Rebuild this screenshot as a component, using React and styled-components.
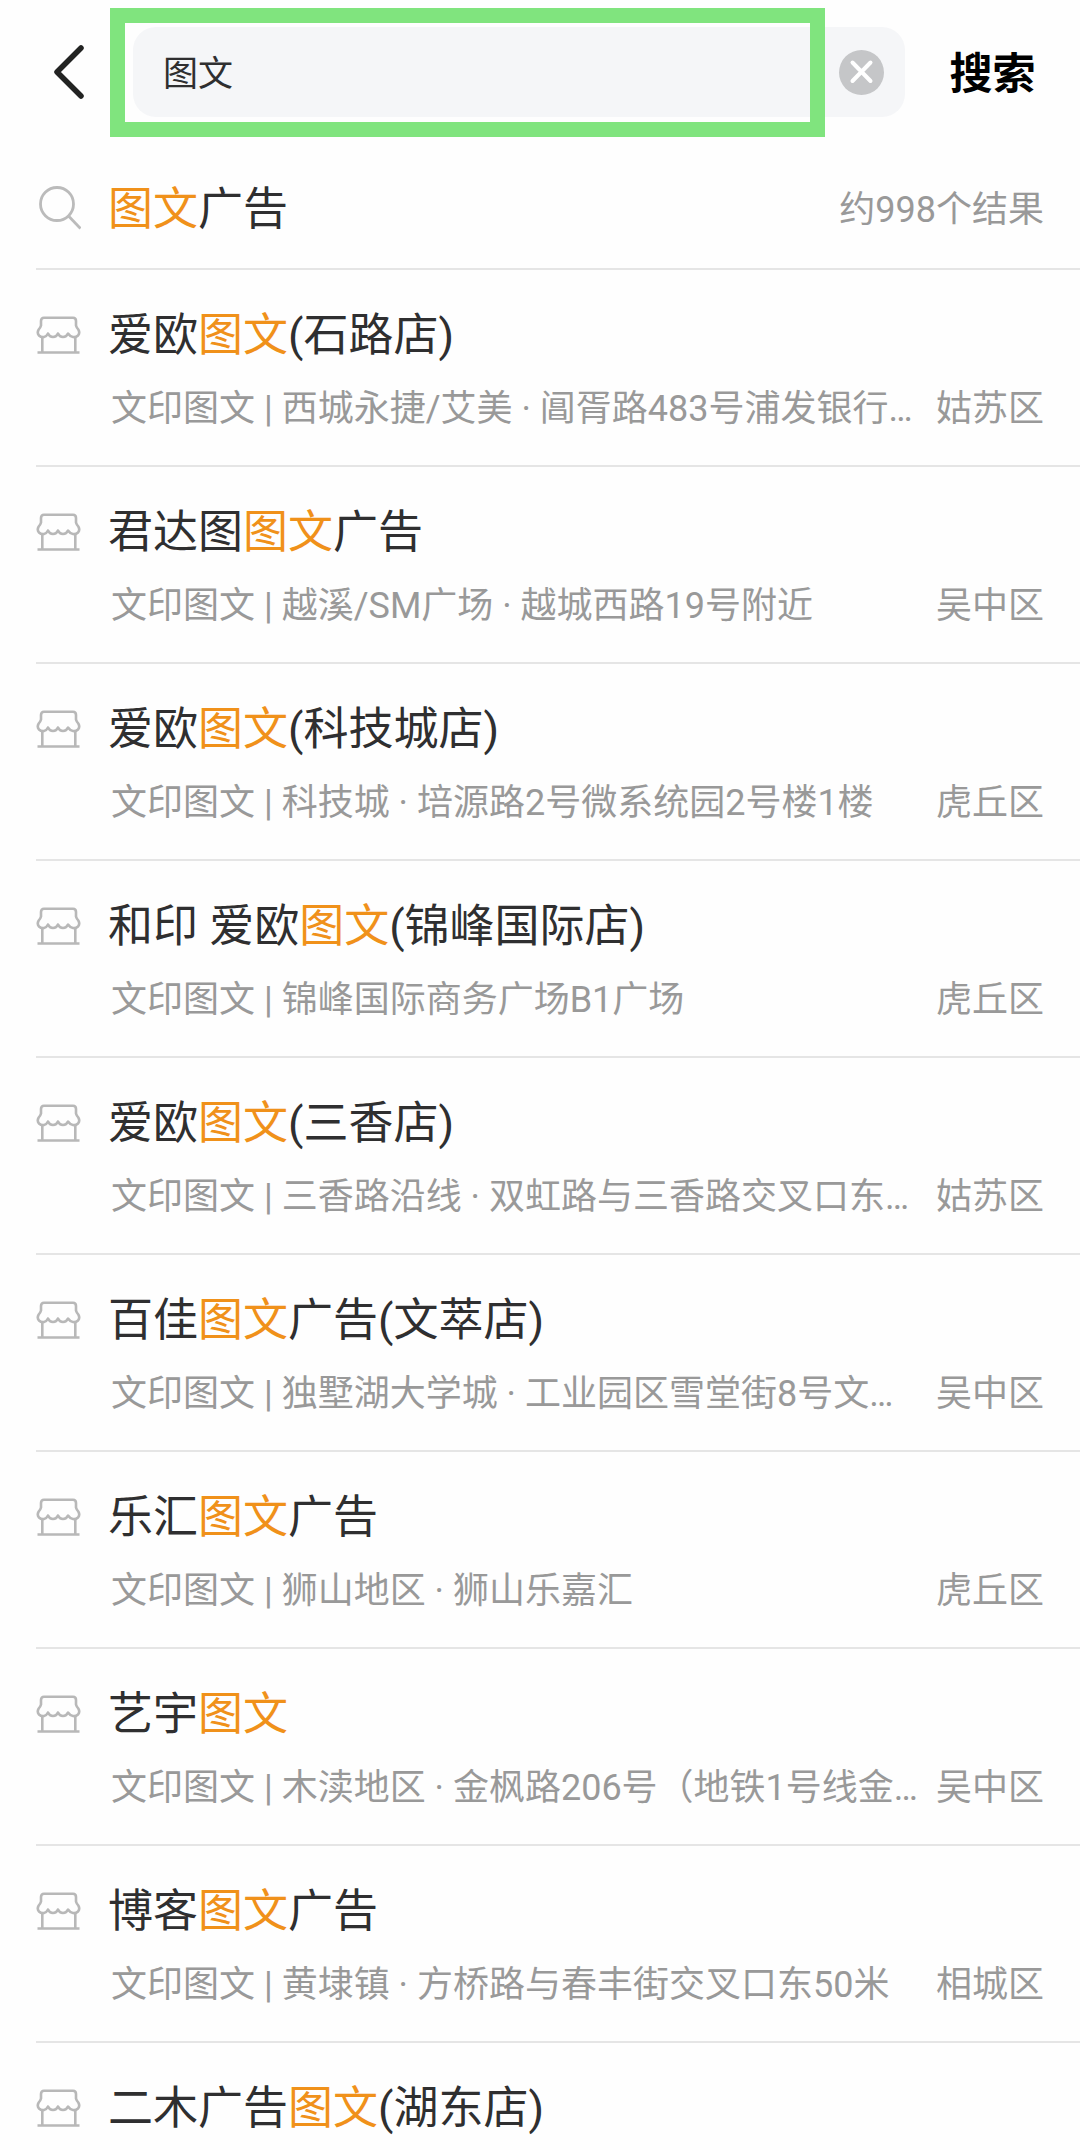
import styled, { createGlobalStyle } from "styled-components";
import { useState } from "react";

const GlobalStyle = createGlobalStyle`
  * {
    box-sizing: border-box;
  }

  body {
    margin: 0;
    background: #fefefe;
    font-family: Roboto, "Noto Sans CJK SC", sans-serif;
    color: #2f2f30;
  }
`;

const Page = styled.main`
  display: flex;
  flex-direction: column;
  width: 100%;
  height: 100vh;
  overflow: hidden;
`;

const Header = styled.form`
  display: flex;
  align-items: center;
  flex-shrink: 0;
  padding: 27px 0 33px;
`;

const BackButton = styled.button`
  display: flex;
  align-items: center;
  width: 133px;
  height: 90px;
  padding: 0 0 0 54px;
  border: none;
  background: none;
  cursor: pointer;
`;

const SearchField = styled.div`
  position: relative;
  display: flex;
  align-items: center;
  flex: 1;
  min-width: 0;
  height: 90px;
  padding: 0 21px 0 30px;
  border-radius: 23px;
  background: #f5f6f8;
`;

const SearchInput = styled.input`
  flex: 1;
  min-width: 0;
  height: 60px;
  padding: 0 0 3px;
  border: none;
  outline: none;
  background: none;
  font-family: inherit;
  font-size: 35px;
  color: #2f2f30;
`;

const FocusFrame = styled.div`
  position: absolute;
  top: -19px;
  right: 80px;
  bottom: -20px;
  left: -23px;
  border: 15px solid #80e47e;
  pointer-events: none;
`;

const ClearButton = styled.button`
  display: flex;
  width: 45px;
  height: 45px;
  padding: 0;
  border: none;
  background: none;
  cursor: pointer;
`;

const SearchButton = styled.button`
  width: 175px;
  height: 90px;
  padding: 0 0 4px;
  border: none;
  background: none;
  font-family: inherit;
  font-size: 43px;
  font-weight: 700;
  color: #000000;
  cursor: pointer;
`;

const Results = styled.ul`
  margin: 0;
  padding: 0 0 0 36px;
  list-style: none;
`;

const Item = styled.li`
  border-bottom: 2px solid #e5e5e5;
`;

const ItemLink = styled.a`
  display: flex;
  gap: 27px;
  padding: ${({ $summary }) => ($summary ? "30px 36px 28px 0" : "36px 36px 32px 0")};
  color: inherit;
  text-decoration: none;
`;

const IconBox = styled.span`
  display: flex;
  align-items: center;
  justify-content: center;
  flex-shrink: 0;
  width: 45px;
  height: 60px;
`;

const Body = styled.div`
  flex: 1;
  min-width: 0;
`;

const Title = styled.div`
  font-size: 45px;
  line-height: 60px;
  white-space: nowrap;
`;

const Highlight = styled.span`
  color: #f0911a;
`;

const Detail = styled.div`
  display: flex;
  justify-content: space-between;
  gap: 16px;
  margin-top: 19px;
  padding-left: 3px;
  font-size: 36px;
  line-height: 48px;
  color: #999999;
`;

const Address = styled.span`
  min-width: 0;
  overflow: hidden;
  white-space: nowrap;
`;

const District = styled.span`
  flex-shrink: 0;
`;

const Count = styled.span`
  font-size: 36px;
  line-height: 60px;
  color: #999999;
`;

const BackIcon = () => (
  <svg width="30" height="54" viewBox="0 0 30 54" fill="none" stroke="#222322" strokeWidth="5.5" strokeLinecap="round" strokeLinejoin="round" aria-hidden="true">
    <path d="M27 3L3 27l24 24" />
  </svg>
);

const ClearIcon = () => (
  <svg width="45" height="45" viewBox="0 0 45 45" aria-hidden="true">
    <circle cx="22.5" cy="22.5" r="22.5" fill="#c5c6c8" />
    <path d="M13.500 12.500l18 18.500M31.500 12.500l-18 18.500" stroke="#ffffff" strokeWidth="4" strokeLinecap="round" />
  </svg>
);

const SearchIcon = () => (
  <svg width="45" height="48" viewBox="0 0 45 48" fill="none" stroke="#bbbbbb" strokeWidth="2.8" aria-hidden="true">
    <circle cx="21" cy="18" r="16.5" />
    <path d="M32.500 30l12 12.500" />
  </svg>
);

const ShopIcon = () => (
  <svg width="45" height="40" viewBox="0 0 45 40" fill="none" stroke="#b8b8b8" strokeWidth="2.6" strokeLinejoin="round" aria-hidden="true">
    <path d="M8 1.800H37Q40 1.800 40 5V9.500Q40.500 11.500 42.300 13.500Q44.300 17 42 19.500Q40 21.500 37 21Q34 20.500 32 17.500Q30.500 21 27 21Q23.500 21 22 17.500Q20.500 21 17 21Q13.500 21 12 17.500Q10.500 20.500 8 21Q5 21.500 3 19.500Q.7 17 2.700 13.500Q4.500 11.500 5 9.500V5Q5 1.800 8 1.800Z" />
    <path d="M6.300 21v15M39.300 21v15M1.500 36.500h42" />
  </svg>
);

const KEYWORD = "图文";

const shops = [
  { before: "爱欧", after: "(石路店)", address: "西城永捷/艾美 · 阊胥路483号浦发银行…", district: "姑苏区" },
  { before: "君达图", after: "广告", address: "越溪/SM广场 · 越城西路19号附近", district: "吴中区" },
  { before: "爱欧", after: "(科技城店)", address: "科技城 · 培源路2号微系统园2号楼1楼", district: "虎丘区" },
  { before: "和印 爱欧", after: "(锦峰国际店)", address: "锦峰国际商务广场B1广场", district: "虎丘区" },
  { before: "爱欧", after: "(三香店)", address: "三香路沿线 · 双虹路与三香路交叉口东…", district: "姑苏区" },
  { before: "百佳", after: "广告(文萃店)", address: "独墅湖大学城 · 工业园区雪堂街8号文…", district: "吴中区" },
  { before: "乐汇", after: "广告", address: "狮山地区 · 狮山乐嘉汇", district: "虎丘区" },
  { before: "艺宇", after: "", address: "木渎地区 · 金枫路206号（地铁1号线金…", district: "吴中区" },
  { before: "博客", after: "广告", address: "黄埭镇 · 方桥路与春丰街交叉口东50米", district: "相城区" },
  { before: "二木广告", after: "(湖东店)" },
];

const App = () => {
  const [query, setQuery] = useState(KEYWORD);

  return (
    <Page lang="zh-CN">
      <GlobalStyle />
      <Header onSubmit={(e) => e.preventDefault()}>
        <BackButton type="button" aria-label="返回">
          <BackIcon />
        </BackButton>
        <SearchField>
          <SearchInput aria-label="搜索" value={query} onChange={(e) => setQuery(e.target.value)} />
          <ClearButton type="button" aria-label="清除" onClick={() => setQuery("")}>
            <ClearIcon />
          </ClearButton>
          <FocusFrame />
        </SearchField>
        <SearchButton type="submit">搜索</SearchButton>
      </Header>
      <Results>
        <Item>
          <ItemLink href="#all" $summary>
            <IconBox>
              <SearchIcon />
            </IconBox>
            <Body>
              <Title>
                <Highlight>{KEYWORD}</Highlight>广告
              </Title>
            </Body>
            <Count>约998个结果</Count>
          </ItemLink>
        </Item>
        {shops.map((shop, i) => (
          <Item key={i}>
            <ItemLink href={`#shop-${i + 1}`}>
              <IconBox>
                <ShopIcon />
              </IconBox>
              <Body>
                <Title>
                  {shop.before}
                  <Highlight>{KEYWORD}</Highlight>
                  {shop.after}
                </Title>
                {shop.address && (
                  <Detail>
                    <Address>文印图文 | {shop.address}</Address>
                    <District>{shop.district}</District>
                  </Detail>
                )}
              </Body>
            </ItemLink>
          </Item>
        ))}
      </Results>
    </Page>
  );
};

export default App;
